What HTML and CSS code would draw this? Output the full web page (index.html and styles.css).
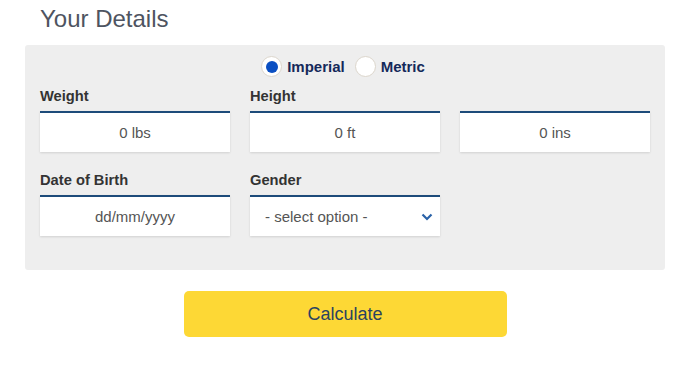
FILE: index.html
```html
<!DOCTYPE html>
<html lang="en">
<head>
    <meta charset="UTF-8">
    <meta name="viewport" content="width=device-width, initial-scale=1.0">
    <title>Your Details</title>
    <link rel="stylesheet" href="styles.css">
</head>
<body>
    <div class="container">
        <h2 class="title">Your Details</h2>

        <div class="panel">
            <div class="units">
                <label class="radio">
                    <span class="radio-ring checked"></span>
                    <span class="radio-text">Imperial</span>
                </label>
                <label class="radio">
                    <span class="radio-ring"></span>
                    <span class="radio-text">Metric</span>
                </label>
            </div>

            <div class="fields">
                <div class="field">
                    <div class="field-label">Weight</div>
                    <input class="field-input" type="text" value="0 lbs">
                </div>
                <div class="field">
                    <div class="field-label">Height</div>
                    <input class="field-input" type="text" value="0 ft">
                </div>
                <div class="field">
                    <div class="field-label">&nbsp;</div>
                    <input class="field-input" type="text" value="0 ins">
                </div>
                <div class="field">
                    <div class="field-label">Date of Birth</div>
                    <input class="field-input" type="text" placeholder="dd/mm/yyyy">
                </div>
                <div class="field">
                    <div class="field-label">Gender</div>
                    <div class="field-input select">
                        <span>- select option -</span>
                        <svg width="12" height="8" viewBox="0 0 12 8">
                            <path d="M1.5 1.5 L6 6 L10.5 1.5" fill="none" stroke="#2a62a8" stroke-width="2.2"/>
                        </svg>
                    </div>
                </div>
            </div>
        </div>

        <div class="actions">
            <button class="calc-btn">Calculate</button>
        </div>
    </div>
</body>
</html>
```

FILE: styles.css
```css
body {
    margin: 0;
    font-family: "Liberation Sans", Arial, sans-serif;
    background-color: #fff;
    color: #333;
}

.container {
    width: 640px;
    margin-left: 25px;
}

.title {
    font-size: 24px;
    font-weight: normal;
    color: #4e5461;
    margin: 5px 0 12px;
    padding-left: 15px;
    line-height: 28px;
}

.panel {
    background-color: #eeeeee;
    border-radius: 3px;
    padding: 11px 15px 34px;
}

.units {
    display: flex;
    justify-content: center;
    gap: 10px;
    height: 21px;
    margin-bottom: 10px;
    padding-right: 4px;
}

.radio {
    display: flex;
    align-items: center;
    gap: 5px;
    cursor: pointer;
}

.radio-ring {
    width: 19px;
    height: 19px;
    border: 1px solid #dcd6cc;
    border-radius: 50%;
    background-color: #fff;
    display: flex;
    align-items: center;
    justify-content: center;
}

.radio-ring.checked::after {
    content: "";
    width: 12px;
    height: 12px;
    border-radius: 50%;
    background-color: #0b4fc2;
}

.radio-text {
    font-size: 15px;
    font-weight: bold;
    color: #15295a;
}

.fields {
    display: grid;
    grid-template-columns: repeat(3, 190px);
    column-gap: 20px;
    row-gap: 19px;
}

.field-label {
    font-size: 14.7px;
    font-weight: bold;
    color: #333;
    line-height: 18px;
    margin-bottom: 6px;
}

.field-input {
    box-sizing: border-box;
    width: 190px;
    height: 41px;
    border: none;
    border-top: 2px solid #1d4b7a;
    background-color: #fff;
    box-shadow: 0 1px 2px rgba(0, 0, 0, 0.12);
    font-family: "Liberation Sans", Arial, sans-serif;
    font-size: 15px;
    color: #555;
    text-align: center;
    padding: 0 10px;
    outline: none;
}

.field-input::placeholder {
    color: #555;
}

.select {
    display: flex;
    align-items: center;
    justify-content: space-between;
    text-align: left;
    padding: 0 7px 0 15px;
}

.actions {
    display: flex;
    justify-content: center;
    margin-top: 21px;
}

.calc-btn {
    width: 323px;
    height: 46px;
    border: none;
    border-radius: 5px;
    background-color: #fdd835;
    color: #2a4360;
    font-family: "Liberation Sans", Arial, sans-serif;
    font-size: 18px;
    cursor: pointer;
}
```
